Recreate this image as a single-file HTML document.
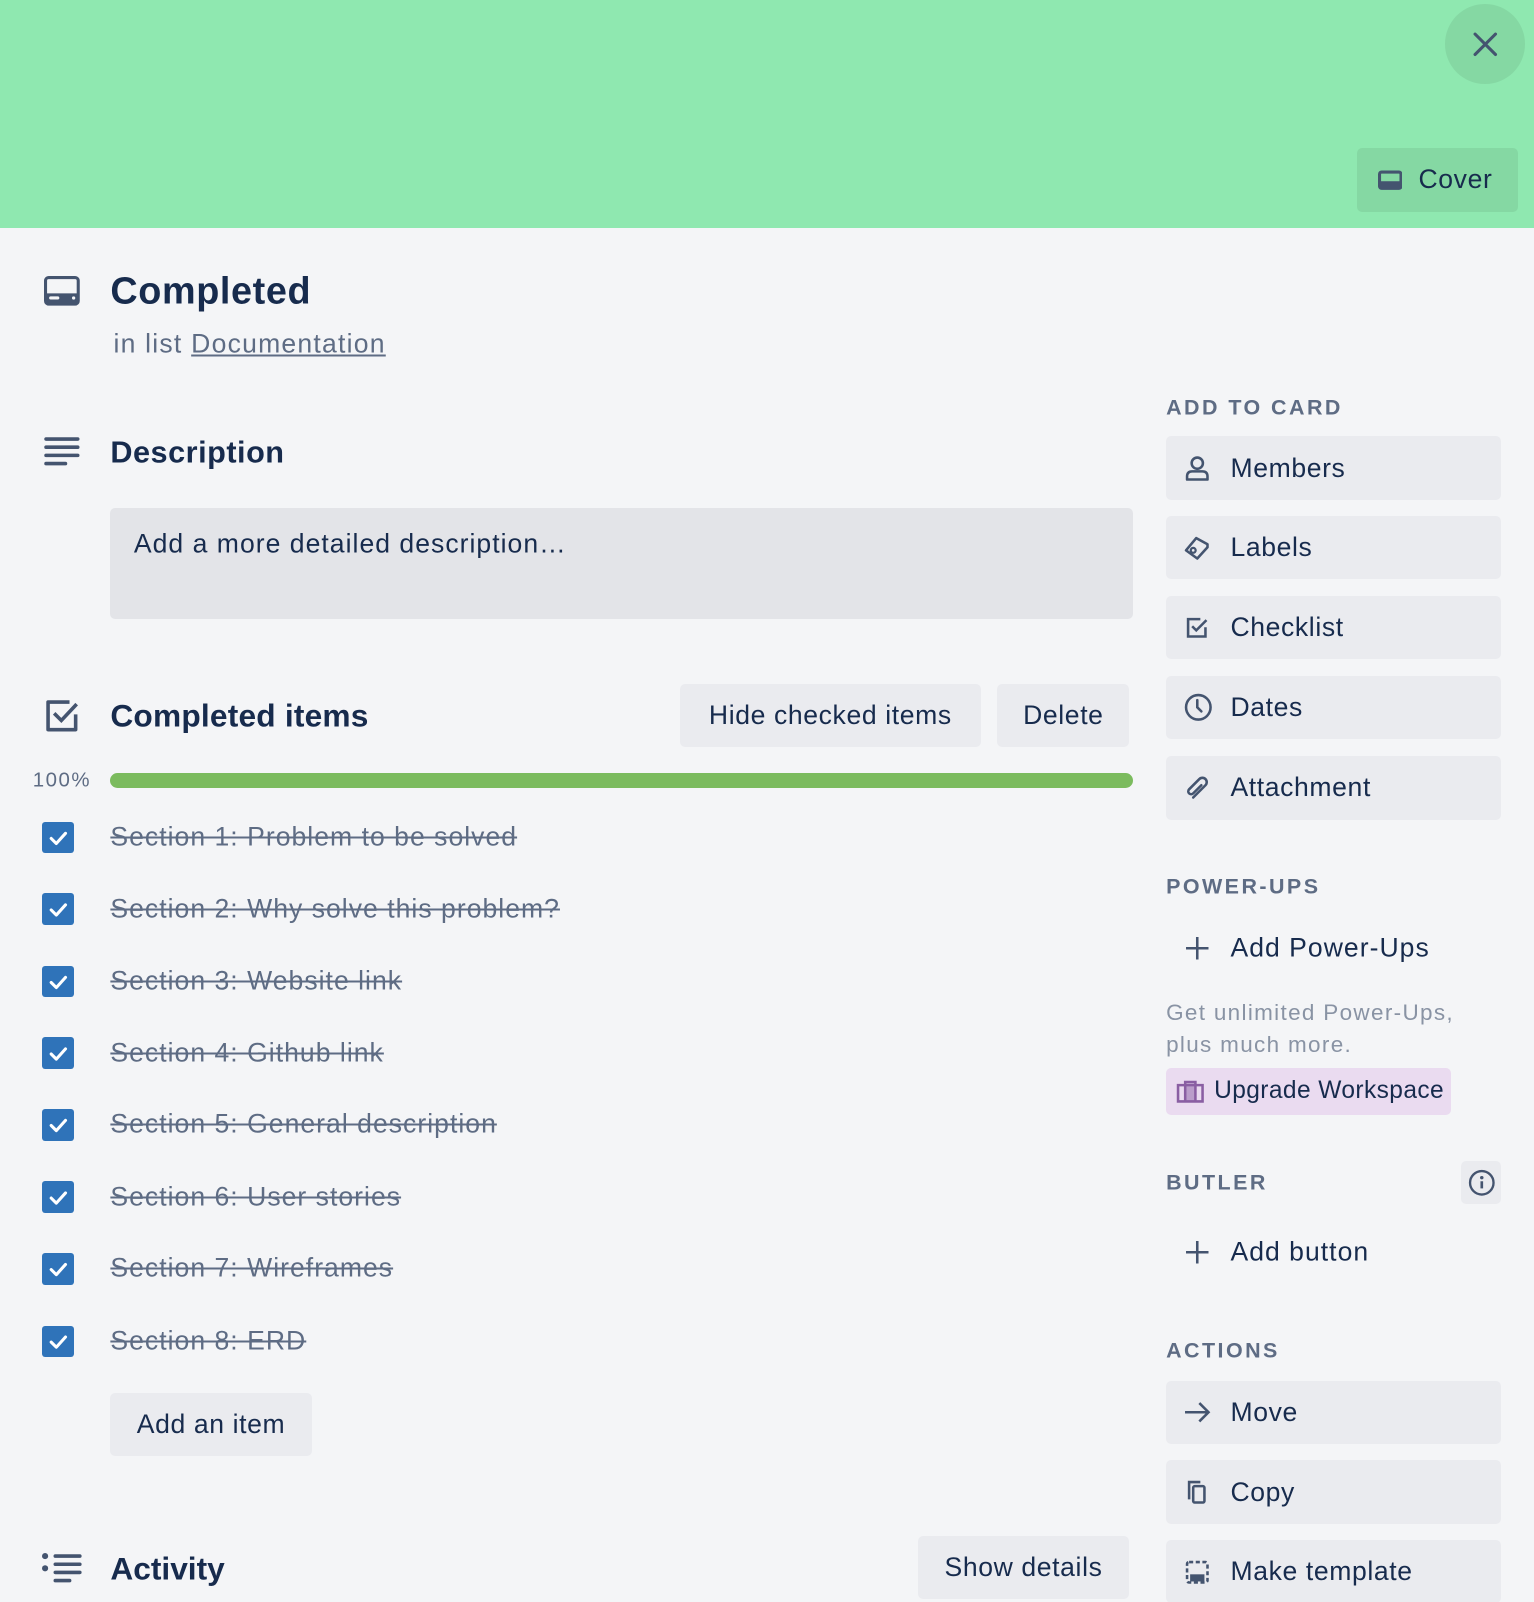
<!DOCTYPE html>
<html><head><meta charset="utf-8"><style>
html,body{margin:0;padding:0;background:#f4f5f7;overflow:hidden}
#w{position:relative;width:1501px;height:1568px;zoom:1.02198;font-family:"Liberation Sans",sans-serif;color:#172b4d;background:#f4f5f7;overflow:hidden}
.a{position:absolute}
.btn{position:absolute;background:#eaebef;border-radius:5px;font-size:26px;display:flex;align-items:center;letter-spacing:0.6px}
.sb{left:1141px;width:328px;height:62px}
.sb svg{position:absolute;left:18px}
.sb span{position:absolute;left:63px}
.hd{position:absolute;left:1141px;font-size:21px;font-weight:bold;color:#5e6c84;letter-spacing:2.4px;transform:translateY(-50%)}
.t{position:absolute;transform:translateY(-50%);white-space:nowrap}
.cb{position:absolute;left:41px;width:31px;height:31px;background:#2f73b9;border-radius:3px}
.it{position:absolute;left:108px;font-size:26px;color:#5e6c84;text-decoration:line-through;transform:translateY(-50%);white-space:nowrap;letter-spacing:1px}
</style></head><body><div id="w">
<div class="a" style="left:0;top:0;width:1501px;height:223px;background:#8fe8b0"></div>
<div class="a" style="left:1414px;top:4px;width:78px;height:78px;border-radius:50%;background:#85d8a3"></div>
<svg class="a" style="left:1440px;top:30px" width="26" height="26" viewBox="0 0 26 26"><path d="M3 3L23 23M23 3L3 23" stroke="#44546f" stroke-width="3" stroke-linecap="round"/></svg>
<div class="btn" style="left:1328px;top:145px;width:157px;height:62px;background:#85d8a3"><svg class="a" style="left:20px" width="24" height="20" viewBox="0 0 24 20"><rect x="1.5" y="2" width="21" height="16" rx="2" fill="none" stroke="#44546f" stroke-width="3"/><rect x="1.5" y="11" width="21" height="7" fill="#44546f"/></svg><span class="a" style="left:60px">Cover</span></div>

<svg class="a" style="left:43px;top:270px" width="35" height="29" viewBox="0 0 35 29"><rect x="1.5" y="1.5" width="32" height="26" rx="3" fill="none" stroke="#44546f" stroke-width="3"/><rect x="1.5" y="17" width="32" height="10" fill="#44546f"/><rect x="5" y="20" width="10" height="3" rx="1.5" fill="#f4f5f7"/><circle cx="29" cy="21.5" r="1.6" fill="#f4f5f7"/></svg>
<div class="t" style="left:108px;top:286px;font-size:37px;font-weight:bold;letter-spacing:0.6px">Completed</div>
<div class="t" style="left:111px;top:337px;font-size:26px;color:#5e6c84;letter-spacing:1.2px">in list <u>Documentation</u></div>

<svg class="a" style="left:43px;top:428px" width="35" height="28" viewBox="0 0 35 28"><g stroke="#44546f" stroke-width="3.5" stroke-linecap="round"><path d="M2 2H33M2 10H33M2 18H33M2 26H21"/></g></svg>
<div class="t" style="left:108px;top:443px;font-size:30px;font-weight:bold;letter-spacing:0.5px">Description</div>
<div class="a" style="left:108px;top:497px;width:1001px;height:109px;background:#e3e4e8;border-radius:5px"></div>
<div class="t" style="left:131px;top:532px;font-size:26px;letter-spacing:1px">Add a more detailed description…</div>

<svg class="a" style="left:44px;top:684px" width="34" height="33" viewBox="0 0 34 33"><path d="M30 15V30H3V3H24" fill="none" stroke="#44546f" stroke-width="3.5" stroke-linejoin="round"/><path d="M9 14L16 21L31 5" fill="none" stroke="#44546f" stroke-width="3.5"/></svg>
<div class="t" style="left:108px;top:701px;font-size:31px;font-weight:bold;letter-spacing:0.2px">Completed items</div>
<div class="btn" style="left:665px;top:669px;width:295px;height:62px;justify-content:center">Hide checked items</div>
<div class="btn" style="left:976px;top:669px;width:129px;height:62px;justify-content:center">Delete</div>
<div class="t" style="left:32px;top:764px;font-size:20px;color:#5e6c84;letter-spacing:1.5px">100%</div>
<div class="a" style="left:108px;top:756px;width:1001px;height:15px;background:#7bbb5e;border-radius:8px"></div>

<div class="cb" style="top:804px"></div><div class="it" style="top:819px">Section 1: Problem to be solved</div>
<div class="cb" style="top:874px"></div><div class="it" style="top:889px">Section 2: Why solve this problem?</div>
<div class="cb" style="top:945px"></div><div class="it" style="top:960px">Section 3: Website link</div>
<div class="cb" style="top:1015px"></div><div class="it" style="top:1030px">Section 4: Github link</div>
<div class="cb" style="top:1085px"></div><div class="it" style="top:1100px">Section 5: General description</div>
<div class="cb" style="top:1156px"></div><div class="it" style="top:1171px">Section 6: User stories</div>
<div class="cb" style="top:1226px"></div><div class="it" style="top:1241px">Section 7: Wireframes</div>
<div class="cb" style="top:1297px"></div><div class="it" style="top:1312px">Section 8: ERD</div>
<svg class="a" style="left:41px;top:804px" width="31" height="540" viewBox="0 0 31 540"><g fill="none" stroke="#fff" stroke-width="3" stroke-linecap="round" stroke-linejoin="round">
<path d="M9 16L14 21L23 11"/><path transform="translate(0,70)" d="M9 16L14 21L23 11"/><path transform="translate(0,141)" d="M9 16L14 21L23 11"/><path transform="translate(0,211)" d="M9 16L14 21L23 11"/><path transform="translate(0,281)" d="M9 16L14 21L23 11"/><path transform="translate(0,352)" d="M9 16L14 21L23 11"/><path transform="translate(0,422)" d="M9 16L14 21L23 11"/><path transform="translate(0,493)" d="M9 16L14 21L23 11"/></g></svg>
<div class="btn" style="left:108px;top:1363px;width:197px;height:62px;justify-content:center">Add an item</div>

<svg class="a" style="left:40px;top:1520px" width="40" height="30" viewBox="0 0 40 30"><g fill="#44546f"><circle cx="4" cy="3" r="3"/><circle cx="4" cy="15" r="3"/></g><g stroke="#44546f" stroke-width="3.5" stroke-linecap="round"><path d="M14 3H38M14 11H38M14 19H38M14 27H28"/></g></svg>
<div class="t" style="left:108px;top:1535px;font-size:31px;font-weight:bold">Activity</div>
<div class="btn" style="left:898px;top:1503px;width:207px;height:62px;justify-content:center">Show details</div>

<div class="hd" style="top:399px">ADD TO CARD</div>
<div class="btn sb" style="top:427px"><svg width="26" height="26" viewBox="0 0 26 26"><circle cx="13" cy="8" r="5.5" fill="none" stroke="#44546f" stroke-width="2.5"/><path d="M3 24V21Q3 16 8 16H18Q23 16 23 21V24Z" fill="none" stroke="#44546f" stroke-width="2.5" stroke-linejoin="round"/></svg><span>Members</span></div>
<div class="btn sb" style="top:505px"><svg width="26" height="26" viewBox="0 0 26 26"><path d="M2 16L12 4L23 10V13L13 24Z" fill="none" stroke="#44546f" stroke-width="2.5" stroke-linejoin="round"/><circle cx="9" cy="16" r="2.4" fill="none" stroke="#44546f" stroke-width="2.2"/></svg><span>Labels</span></div>
<div class="btn sb" style="top:583px"><svg width="26" height="26" viewBox="0 0 26 26"><path d="M21 13V22H4V5H16" fill="none" stroke="#44546f" stroke-width="2.5"/><path d="M8 12L12 16L22 6" fill="none" stroke="#44546f" stroke-width="2.5"/></svg><span>Checklist</span></div>
<div class="btn sb" style="top:661px"><svg width="28" height="28" viewBox="0 0 28 28"><circle cx="14" cy="14" r="12" fill="none" stroke="#44546f" stroke-width="2.5"/><path d="M13 7V14L17 18" fill="none" stroke="#44546f" stroke-width="2.5" stroke-linecap="round"/></svg><span>Dates</span></div>
<div class="btn sb" style="top:740px"><svg width="26" height="26" viewBox="0 0 26 26"><path d="M9 22L21 10A4 4 0 0 0 15 4L5 14A2.5 2.5 0 0 0 9 18L17 10" fill="none" stroke="#44546f" stroke-width="2.5" stroke-linecap="round"/></svg><span>Attachment</span></div>

<div class="hd" style="top:868px">POWER-UPS</div>
<svg class="a" style="left:1160px;top:916px" width="24" height="24" viewBox="0 0 24 24"><path d="M12 1V23M1 12H23" stroke="#44546f" stroke-width="2.5"/></svg>
<div class="t" style="left:1204px;top:928px;font-size:26px;letter-spacing:1px">Add Power-Ups</div>
<div class="a" style="left:1141px;top:976px;font-size:22px;color:#8993a4;line-height:31px;letter-spacing:1.3px">Get unlimited Power-Ups,<br>plus much more.</div>
<div class="a" style="left:1141px;top:1045px;width:279px;height:46px;background:#eadbf0;border-radius:5px"></div>
<svg class="a" style="left:1151px;top:1057px" width="28" height="22" viewBox="0 0 28 22"><path d="M2 5H26V21H2Z M9 5V2H19V5 M9 5V21 M19 5V21" fill="none" stroke="#8a5fa3" stroke-width="2.5"/><rect x="9" y="5" width="10" height="16" fill="#8a5fa3" opacity=".5"/></svg>
<div class="t" style="left:1188px;top:1068px;font-size:24px;letter-spacing:0.4px">Upgrade Workspace</div>

<div class="hd" style="top:1158px">BUTLER</div>
<div class="a" style="left:1430px;top:1136px;width:39px;height:42px;background:#eaebef;border-radius:5px"></div>
<svg class="a" style="left:1436px;top:1144px" width="27" height="27" viewBox="0 0 27 27"><circle cx="13.5" cy="13.5" r="11.5" fill="none" stroke="#44546f" stroke-width="2.3"/><circle cx="13.5" cy="8.5" r="1.7" fill="#44546f"/><path d="M13.5 12V19" stroke="#44546f" stroke-width="2.6"/></svg>
<svg class="a" style="left:1160px;top:1213px" width="24" height="24" viewBox="0 0 24 24"><path d="M12 1V23M1 12H23" stroke="#44546f" stroke-width="2.5"/></svg>
<div class="t" style="left:1204px;top:1225px;font-size:26px;letter-spacing:1px">Add button</div>

<div class="hd" style="top:1322px">ACTIONS</div>
<div class="btn sb" style="top:1351px"><svg width="26" height="24" viewBox="0 0 26 24"><path d="M1 12H24M15 3L24 12L15 21" fill="none" stroke="#44546f" stroke-width="2.5"/></svg><span>Move</span></div>
<div class="btn sb" style="top:1429px"><svg width="26" height="26" viewBox="0 0 26 26"><path d="M5 20V3H16" fill="none" stroke="#44546f" stroke-width="2.5"/><rect x="9" y="7" width="11" height="16" rx="1.5" fill="none" stroke="#44546f" stroke-width="2.5"/></svg><span>Copy</span></div>
<div class="btn sb" style="top:1507px"><svg width="26" height="26" viewBox="0 0 26 26"><rect x="3" y="3" width="20" height="20" rx="2" fill="none" stroke="#44546f" stroke-width="2.5" stroke-dasharray="4 2.5"/><rect x="6" y="15" width="14" height="7" fill="#44546f"/></svg><span>Make template</span></div>
</div></body></html>
